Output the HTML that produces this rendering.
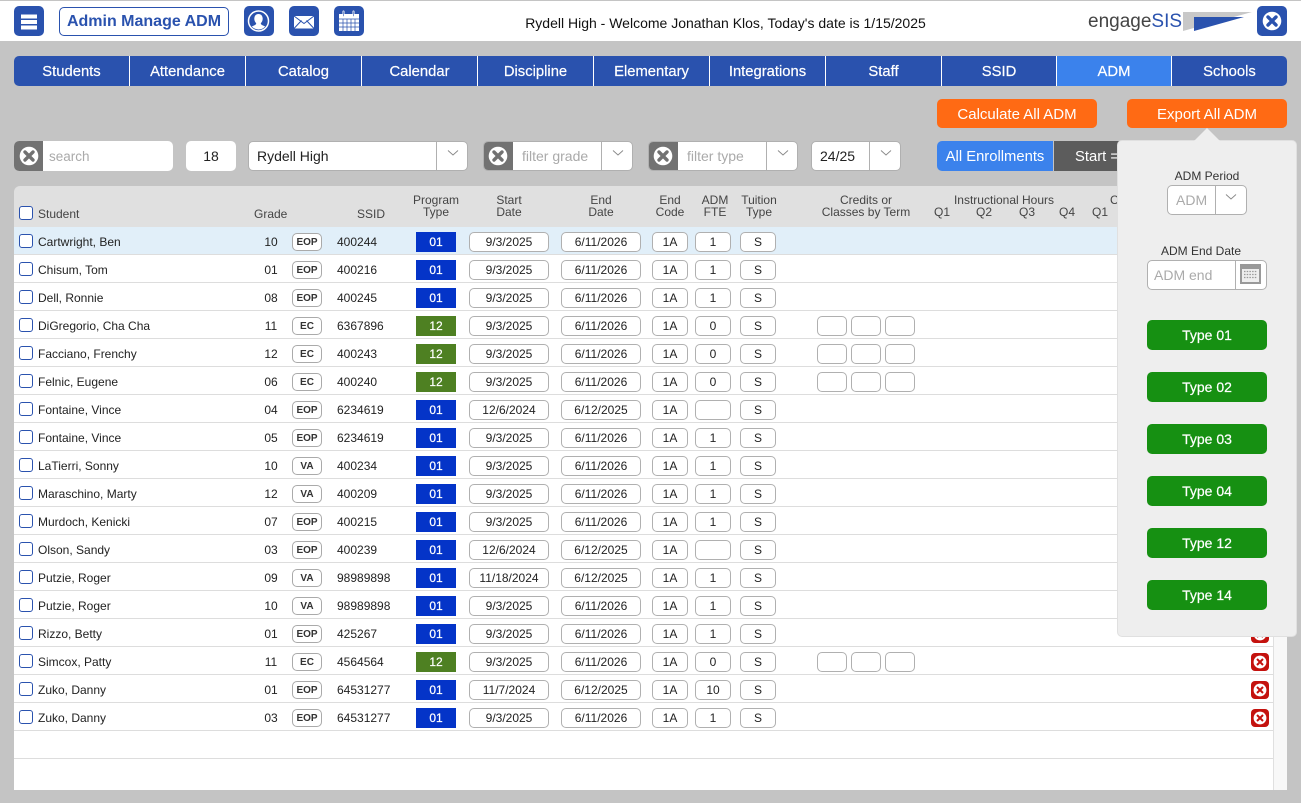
<!DOCTYPE html>
<html><head><meta charset="utf-8"><title>Admin Manage ADM</title>
<style>
*{box-sizing:border-box}
html,body{margin:0;padding:0;width:1301px;height:803px;overflow:hidden;background:#c4c4c4;font-family:"Liberation Sans",Arial,sans-serif;color:#222}
.a,.a>*,.r>*{position:absolute}
#top{position:absolute;left:0;top:1px;width:1301px;height:40px;background:#fff}
.ib{position:absolute;width:30px;height:30px;top:6px;background:#2a52ae;border-radius:5px}
.ib svg{position:absolute;left:0;top:0}
#title{position:absolute;left:59px;top:7px;width:170px;height:29px;border:1px solid #2a52ae;border-radius:5px;color:#2a52ae;font-weight:bold;font-size:16px;line-height:28px;text-align:center;white-space:nowrap}
#wel{position:absolute;left:425px;width:601px;top:15px;text-align:center;font-size:14px;line-height:17px;color:#111;white-space:nowrap}
#nav{position:absolute;left:14px;top:56px;width:1273px;height:30px;border-radius:5px;overflow:hidden;background:#2a52ae}
#nav span{position:absolute;top:0;height:30px;line-height:33px;text-align:center;color:#fff;font-size:14.800px;-webkit-text-stroke:.2px #fff;border-right:1px solid #fff}
.or{position:absolute;top:99px;width:160px;height:29px;background:#ff6a14;color:#fff;border-radius:5px;text-align:center;line-height:31px;font-size:15px}
.f{position:absolute;top:141px;height:30px;background:#fff;border:1px solid #b0b0b0;border-radius:5px;font-size:14px;line-height:28px;overflow:hidden;white-space:nowrap}
.gx{position:absolute;left:-1px;top:-1px;width:30px;height:30px;background:#727272}
.ph{color:#aaa}
.dv{position:absolute;top:0;bottom:0;border-left:1px solid #b0b0b0;width:32px}
.dv svg{position:absolute;left:10px;top:5px}
#hd{position:absolute;left:14px;top:186px;width:1273px;height:41px;background:#e0e0e0;border-radius:6px 6px 0 0}
.h{position:absolute;font-size:12px;line-height:12px;color:#444;text-align:center;white-space:nowrap}
#tb{position:absolute;left:14px;top:227px;width:1273px;height:563px;background:#fff}
#gut{position:absolute;left:1259px;top:0;width:14px;height:563px;background:#f8f8f8;border-left:1px solid #e0e0e0}
.r{position:absolute;left:0;width:1259px;height:28px;border-bottom:1px solid #ddd;font-size:12px;color:#222}
.c{left:5px;top:7px;width:14px;height:14px;border:1px solid #2a52ae;border-radius:3px;background:#fff}
.n{left:24px;top:0;line-height:30px;white-space:nowrap}
.g{left:245px;width:24px;top:0;line-height:30px;text-align:center}
.b{left:278px;top:6px;width:30px;height:18px;border:1px solid #aaa;border-radius:5px;font-weight:bold;font-size:10px;line-height:17px;text-align:center;background:#fff;color:#333}
.s{left:323px;top:0;line-height:30px}
.t{left:402px;top:5px;width:40px;height:20px;background:#0434c8;color:#fff;font-size:12px;-webkit-text-stroke:.2px #fff;line-height:20px;text-align:center}
.t.e{background:#4e8022}
.i{top:5px;height:20px;border:1px solid #b0b0b0;border-radius:5px;background:#fff;text-align:center;line-height:18px;font-size:12px}
.d1{left:455px;width:80px}.d2{left:547px;width:80px}.d3{left:638px;width:36px}.d4{left:681px;width:36px}.d5{left:726px;width:36px}
.k1{left:803px;width:30px}.k2{left:837px;width:30px}.k3{left:871px;width:30px}
.x{left:1237px;top:6px}
#pop{position:absolute;left:1117px;top:140px;width:180px;height:497px;background:#eee;border:1px solid #e0e0e0;border-radius:5px}
#arr{position:absolute;left:1194px;top:128px}
.pl{position:absolute;font-size:12px;line-height:14px;color:#333;text-align:center;white-space:nowrap}
.gb{position:absolute;left:29px;width:120px;height:30px;background:#169012;color:#fff;border-radius:5px;text-align:center;font-size:14px;-webkit-text-stroke:.2px #fff;line-height:31px}
</style></head><body>
<svg width="0" height="0" style="position:absolute"><defs>
<symbol id="cx" viewBox="0 0 30 30"><circle cx="15" cy="15" r="9.300" fill="#fff"/><path d="M11 11l8 8M19 11l-8 8" stroke="currentColor" stroke-width="3.400" stroke-linecap="round"/></symbol>
<symbol id="rx" viewBox="0 0 18 18"><rect width="18" height="18" rx="4" fill="#c4120e"/><circle cx="9" cy="9" r="6.400" fill="#fff"/><path d="M6 6l6 6M12 6l-6 6" stroke="#c4120e" stroke-width="2"/></symbol>
<symbol id="ch" viewBox="0 0 12 12"><path d="M1 3.500l5 4.500 5-4.500" fill="none" stroke="#888" stroke-width=".9"/></symbol>
</defs></svg>

<div id="top"></div>
<div class="ib" style="left:14px"><svg width="30" height="30"><path d="M7 8.500h16v4H7zM7 14h16v4H7zM7 19.500h16v4H7z" fill="#fff"/></svg></div>
<div id="title">Admin Manage ADM</div>
<div class="ib" style="left:244px"><svg width="30" height="30"><circle cx="14.500" cy="15" r="10" fill="none" stroke="#fff" stroke-width="1.500"/><path d="M14.500 8c2.800 0 4.200 2.200 4.200 4.800 0 2-.9 3.500-1.900 4.400 0 1 .6 1.400 1.400 1.900l3 1.400a9.500 9.500 0 0 1-6.700 3 9.500 9.500 0 0 1-6.700-3l3-1.400c.8-.5 1.400-.9 1.400-1.900-1-.9-1.900-2.400-1.900-4.400 0-2.600 1.400-4.800 4.200-4.800z" fill="#fff"/></svg></div>
<div class="ib" style="left:289px"><svg width="30" height="30"><path d="M5 10h20v12.500H5z" fill="#fff"/><path d="M5 10l10 7.500L25 10M5 22.500l7.500-8M25 22.500l-7.500-8" fill="none" stroke="#2a52ae" stroke-width="1"/></svg></div>
<div class="ib" style="left:334px"><svg width="30" height="30"><path d="M5 8h20v17H5z" fill="#fff"/><path d="M5 13h20M5 17h20M5 21h20M9 13v12M13 13v12M17 13v12M21 13v12" stroke="#2a52ae" stroke-width=".7"/><path d="M9.500 5.500v4.500M19.500 5.500v4.500" stroke="#fff" stroke-width="2" stroke-linecap="round"/><path d="M9.500 5.500v4.500M19.500 5.500v4.500" stroke="#2a52ae" stroke-width=".6" stroke-linecap="round"/></svg></div>
<div id="wel">Rydell High - Welcome Jonathan Klos, Today's date is 1/15/2025</div>
<div style="position:absolute;left:1088px;top:10px;font-size:19px;line-height:24px;color:#444;white-space:nowrap">engage<span style="color:#2a52ae">SIS</span></div>
<svg style="position:absolute;left:1182px;top:10px" width="72" height="24"><path d="M1 2h69L1 21z" fill="#c8c8c8"/><path d="M12 7h50L12 21z" fill="#2a52ae"/></svg>
<div class="ib" style="left:1257px;color:#2a52ae"><svg width="30" height="30"><use href="#cx"/></svg></div>

<div id="nav">
<span style="left:0;width:116px">Students</span>
<span style="left:116px;width:116px">Attendance</span>
<span style="left:232px;width:116px">Catalog</span>
<span style="left:348px;width:116px">Calendar</span>
<span style="left:464px;width:116px">Discipline</span>
<span style="left:580px;width:116px">Elementary</span>
<span style="left:696px;width:116px">Integrations</span>
<span style="left:812px;width:116px">Staff</span>
<span style="left:928px;width:115px">SSID</span>
<span style="left:1043px;width:115px;background:#3b82ec">ADM</span>
<span style="left:1158px;width:115px;border-right:0">Schools</span>
</div>

<div class="or" style="left:937px">Calculate All ADM</div>
<div class="or" style="left:1127px">Export All ADM</div>

<div class="f" style="left:14px;width:159px;border:0;"><div class="gx" style="left:0;top:0;width:29px;color:#727272"><svg width="30" height="30" style="margin-left:-.5px"><use href="#cx"/></svg></div><span class="ph" style="position:absolute;left:35px;top:2px;font-size:13.500px">search</span></div>
<div class="f" style="left:186px;width:50px;border:0;text-align:center;line-height:30px">18</div>
<div class="f" style="left:248px;width:220px"><span style="position:absolute;left:8px;top:0">Rydell High</span><div class="dv" style="left:187px"><svg width="12" height="12"><use href="#ch"/></svg></div></div>
<div class="f" style="left:483px;width:150px"><div class="gx" style="color:#727272"><svg width="30" height="30"><use href="#cx"/></svg></div><span class="ph" style="position:absolute;left:38px;top:0">filter grade</span><div class="dv" style="left:117px"><svg width="12" height="12"><use href="#ch"/></svg></div></div>
<div class="f" style="left:648px;width:150px"><div class="gx" style="color:#727272"><svg width="30" height="30"><use href="#cx"/></svg></div><span class="ph" style="position:absolute;left:38px;top:0">filter type</span><div class="dv" style="left:117px"><svg width="12" height="12"><use href="#ch"/></svg></div></div>
<div class="f" style="left:811px;width:90px"><span style="position:absolute;left:8px;top:0">24/25</span><div class="dv" style="left:57px"><svg width="12" height="12"><use href="#ch"/></svg></div></div>
<div style="position:absolute;left:937px;top:141px;width:116px;height:30px;background:#3b82ec;color:#fff;border-radius:5px 0 0 5px;text-align:center;font-size:14.800px;line-height:33px">All Enrollments</div>
<div style="position:absolute;left:1054px;top:141px;width:100px;height:30px;background:#5c5c5c;color:#fff;font-size:14.800px;line-height:33px;padding-left:21px;white-space:nowrap">Start =</div>

<div id="hd"></div>
<div class="h" style="left:19px;top:206px;width:14px;height:14px;border:1px solid #2a52ae;border-radius:3px;background:#fff"></div>
<div class="h" style="left:38px;top:208px">Student</div>
<div class="h" style="left:254px;top:208px">Grade</div>
<div class="h" style="left:357px;top:208px">SSID</div>
<div class="h" style="left:396px;width:80px;top:194px">Program<br>Type</div>
<div class="h" style="left:469px;width:80px;top:194px">Start<br>Date</div>
<div class="h" style="left:561px;width:80px;top:194px">End<br>Date</div>
<div class="h" style="left:650px;width:40px;top:194px">End<br>Code</div>
<div class="h" style="left:695px;width:40px;top:194px">ADM<br>FTE</div>
<div class="h" style="left:739px;width:40px;top:194px">Tuition<br>Type</div>
<div class="h" style="left:806px;width:120px;top:194px">Credits or<br>Classes by Term</div>
<div class="h" style="left:944px;width:120px;top:194px">Instructional Hours</div>
<div class="h" style="left:934px;top:206px">Q1</div>
<div class="h" style="left:976px;top:206px">Q2</div>
<div class="h" style="left:1019px;top:206px">Q3</div>
<div class="h" style="left:1059px;top:206px">Q4</div>
<div class="h" style="left:1092px;top:206px">Q1</div>
<div class="h" style="left:1110px;top:194px">C</div>

<div id="tb">
<div id="gut"></div>
<div class="r" style="top:0;background:#e1eff9"><i class="c"></i><span class="n">Cartwright, Ben</span><span class="g">10</span><span class="b">EOP</span><span class="s">400244</span><span class="t">01</span><span class="i d1">9/3/2025</span><span class="i d2">6/11/2026</span><span class="i d3">1A</span><span class="i d4">1</span><span class="i d5">S</span></div>
<div class="r" style="top:28px"><i class="c"></i><span class="n">Chisum, Tom</span><span class="g">01</span><span class="b">EOP</span><span class="s">400216</span><span class="t">01</span><span class="i d1">9/3/2025</span><span class="i d2">6/11/2026</span><span class="i d3">1A</span><span class="i d4">1</span><span class="i d5">S</span></div>
<div class="r" style="top:56px"><i class="c"></i><span class="n">Dell, Ronnie</span><span class="g">08</span><span class="b">EOP</span><span class="s">400245</span><span class="t">01</span><span class="i d1">9/3/2025</span><span class="i d2">6/11/2026</span><span class="i d3">1A</span><span class="i d4">1</span><span class="i d5">S</span></div>
<div class="r" style="top:84px"><i class="c"></i><span class="n">DiGregorio, Cha Cha</span><span class="g">11</span><span class="b">EC</span><span class="s">6367896</span><span class="t e">12</span><span class="i d1">9/3/2025</span><span class="i d2">6/11/2026</span><span class="i d3">1A</span><span class="i d4">0</span><span class="i d5">S</span><span class="i k1"></span><span class="i k2"></span><span class="i k3"></span></div>
<div class="r" style="top:112px"><i class="c"></i><span class="n">Facciano, Frenchy</span><span class="g">12</span><span class="b">EC</span><span class="s">400243</span><span class="t e">12</span><span class="i d1">9/3/2025</span><span class="i d2">6/11/2026</span><span class="i d3">1A</span><span class="i d4">0</span><span class="i d5">S</span><span class="i k1"></span><span class="i k2"></span><span class="i k3"></span></div>
<div class="r" style="top:140px"><i class="c"></i><span class="n">Felnic, Eugene</span><span class="g">06</span><span class="b">EC</span><span class="s">400240</span><span class="t e">12</span><span class="i d1">9/3/2025</span><span class="i d2">6/11/2026</span><span class="i d3">1A</span><span class="i d4">0</span><span class="i d5">S</span><span class="i k1"></span><span class="i k2"></span><span class="i k3"></span></div>
<div class="r" style="top:168px"><i class="c"></i><span class="n">Fontaine, Vince</span><span class="g">04</span><span class="b">EOP</span><span class="s">6234619</span><span class="t">01</span><span class="i d1">12/6/2024</span><span class="i d2">6/12/2025</span><span class="i d3">1A</span><span class="i d4"></span><span class="i d5">S</span></div>
<div class="r" style="top:196px"><i class="c"></i><span class="n">Fontaine, Vince</span><span class="g">05</span><span class="b">EOP</span><span class="s">6234619</span><span class="t">01</span><span class="i d1">9/3/2025</span><span class="i d2">6/11/2026</span><span class="i d3">1A</span><span class="i d4">1</span><span class="i d5">S</span></div>
<div class="r" style="top:224px"><i class="c"></i><span class="n">LaTierri, Sonny</span><span class="g">10</span><span class="b">VA</span><span class="s">400234</span><span class="t">01</span><span class="i d1">9/3/2025</span><span class="i d2">6/11/2026</span><span class="i d3">1A</span><span class="i d4">1</span><span class="i d5">S</span></div>
<div class="r" style="top:252px"><i class="c"></i><span class="n">Maraschino, Marty</span><span class="g">12</span><span class="b">VA</span><span class="s">400209</span><span class="t">01</span><span class="i d1">9/3/2025</span><span class="i d2">6/11/2026</span><span class="i d3">1A</span><span class="i d4">1</span><span class="i d5">S</span></div>
<div class="r" style="top:280px"><i class="c"></i><span class="n">Murdoch, Kenicki</span><span class="g">07</span><span class="b">EOP</span><span class="s">400215</span><span class="t">01</span><span class="i d1">9/3/2025</span><span class="i d2">6/11/2026</span><span class="i d3">1A</span><span class="i d4">1</span><span class="i d5">S</span></div>
<div class="r" style="top:308px"><i class="c"></i><span class="n">Olson, Sandy</span><span class="g">03</span><span class="b">EOP</span><span class="s">400239</span><span class="t">01</span><span class="i d1">12/6/2024</span><span class="i d2">6/12/2025</span><span class="i d3">1A</span><span class="i d4"></span><span class="i d5">S</span></div>
<div class="r" style="top:336px"><i class="c"></i><span class="n">Putzie, Roger</span><span class="g">09</span><span class="b">VA</span><span class="s">98989898</span><span class="t">01</span><span class="i d1">11/18/2024</span><span class="i d2">6/12/2025</span><span class="i d3">1A</span><span class="i d4">1</span><span class="i d5">S</span></div>
<div class="r" style="top:364px"><i class="c"></i><span class="n">Putzie, Roger</span><span class="g">10</span><span class="b">VA</span><span class="s">98989898</span><span class="t">01</span><span class="i d1">9/3/2025</span><span class="i d2">6/11/2026</span><span class="i d3">1A</span><span class="i d4">1</span><span class="i d5">S</span></div>
<div class="r" style="top:392px"><i class="c"></i><span class="n">Rizzo, Betty</span><span class="g">01</span><span class="b">EOP</span><span class="s">425267</span><span class="t">01</span><span class="i d1">9/3/2025</span><span class="i d2">6/11/2026</span><span class="i d3">1A</span><span class="i d4">1</span><span class="i d5">S</span><svg class="x" width="18" height="18"><use href="#rx"/></svg></div>
<div class="r" style="top:420px"><i class="c"></i><span class="n">Simcox, Patty</span><span class="g">11</span><span class="b">EC</span><span class="s">4564564</span><span class="t e">12</span><span class="i d1">9/3/2025</span><span class="i d2">6/11/2026</span><span class="i d3">1A</span><span class="i d4">0</span><span class="i d5">S</span><span class="i k1"></span><span class="i k2"></span><span class="i k3"></span><svg class="x" width="18" height="18"><use href="#rx"/></svg></div>
<div class="r" style="top:448px"><i class="c"></i><span class="n">Zuko, Danny</span><span class="g">01</span><span class="b">EOP</span><span class="s">64531277</span><span class="t">01</span><span class="i d1">11/7/2024</span><span class="i d2">6/12/2025</span><span class="i d3">1A</span><span class="i d4">10</span><span class="i d5">S</span><svg class="x" width="18" height="18"><use href="#rx"/></svg></div>
<div class="r" style="top:476px"><i class="c"></i><span class="n">Zuko, Danny</span><span class="g">03</span><span class="b">EOP</span><span class="s">64531277</span><span class="t">01</span><span class="i d1">9/3/2025</span><span class="i d2">6/11/2026</span><span class="i d3">1A</span><span class="i d4">1</span><span class="i d5">S</span><svg class="x" width="18" height="18"><use href="#rx"/></svg></div>
<div class="r" style="top:504px"></div>
</div>

<div id="pop">
<div class="pl" style="left:0;width:178px;top:28px">ADM Period</div>
<div class="f" style="left:49px;top:44px;width:80px;background:#fff"><span class="ph" style="position:absolute;left:8px;top:0">ADM</span><div class="dv" style="left:47px"><svg width="12" height="12" style="left:9px"><use href="#ch"/></svg></div></div>
<div class="pl" style="left:0;width:166px;top:103px">ADM End Date</div>
<div class="f" style="left:29px;top:119px;width:120px;background:#fff"><span class="ph" style="position:absolute;left:6px;top:0">ADM end</span><div class="dv" style="left:87px"><svg width="22" height="21" style="left:4px;top:3px"><path d="M0 0h21v20H0z" fill="#999"/><path d="M2 5h17v13H2z" fill="#eee"/><path d="M4 7.500h13M4 10.500h13M4 13.500h13" stroke="#999" stroke-width="1.200" stroke-dasharray="1.500 1.200"/></svg></div></div>
<div class="gb" style="top:179px">Type 01</div>
<div class="gb" style="top:231px">Type 02</div>
<div class="gb" style="top:283px">Type 03</div>
<div class="gb" style="top:335px">Type 04</div>
<div class="gb" style="top:387px">Type 12</div>
<div class="gb" style="top:439px">Type 14</div>
</div>
<svg id="arr" width="26" height="14"><path d="M0 13L13 0l13 13z" fill="#eee"/></svg>
</body></html>
